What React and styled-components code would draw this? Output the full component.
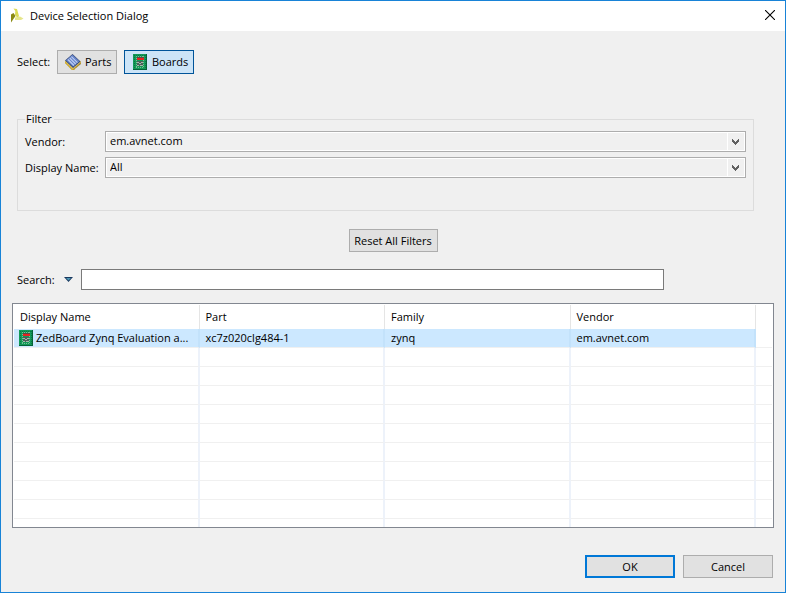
import React, { useState } from "react";
import styled, { createGlobalStyle } from "styled-components";

const GlobalStyle = createGlobalStyle`
  * {
    box-sizing: border-box;
  }
  body {
    margin: 0;
    color: #000;
    font-family: "Open Sans", "Noto Sans", sans-serif;
    font-size: 11px;
    line-height: 16px;
  }
  button, input, select {
    font: inherit;
    color: inherit;
    margin: 0;
  }
  svg {
    flex-shrink: 0;
  }
`;

const Window = styled.div`
  display: flex;
  flex-direction: column;
  min-height: 100vh;
  background: #f0f0f0;
  border: 1px solid #1883d7;
`;

const TitleBar = styled.header`
  display: flex;
  align-items: center;
  height: 30px;
  padding: 0 10px 0 8px;
  background: #fff;
`;

const Title = styled.h1`
  flex: 1;
  margin: 0 0 0 5px;
  font-size: 11px;
  font-weight: 400;
`;

const CloseButton = styled.button`
  display: flex;
  padding: 0 0 2px;
  border: 0;
  background: none;
`;

const Content = styled.main`
  display: flex;
  flex: 1;
  flex-direction: column;
  padding: 19px 11px 14px;
`;

const Toolbar = styled.div`
  display: flex;
  align-items: center;
  padding-left: 5px;
`;

const ToolbarLabel = styled.span`
  width: 40px;
`;

const ToggleButton = styled.button`
  display: flex;
  align-items: center;
  gap: 4px;
  width: ${(props) => props.$width}px;
  height: 24px;
  margin-right: 7px;
  padding: 0 0 0 7px;
  border: 1px solid ${(props) => (props.$active ? "#005499" : "#adadad")};
  background: ${(props) => (props.$active ? "#cce4f7" : "#e1e1e1")};
`;

const FilterGroup = styled.fieldset`
  display: grid;
  grid-template-columns: 80px 1fr;
  row-gap: 5px;
  align-items: center;
  margin: 37px 20px 0 5px;
  padding: 4px 7px 32px;
  border: 1px solid #dcdcdc;
`;

const Legend = styled.legend`
  padding: 0 2px 0 1px;
`;

const SelectBox = styled.div`
  position: relative;
  display: flex;
`;

const Select = styled.select`
  appearance: none;
  width: 100%;
  height: 21px;
  padding: 0 20px 2px 4px;
  border: 1px solid #adadad;
  border-radius: 0;
  background: #f0f0f0;
  box-shadow: inset 0 0 0 1px #fff;
`;

const SelectArrow = styled.span`
  position: absolute;
  top: 2px;
  right: 2px;
  bottom: 2px;
  display: flex;
  align-items: center;
  justify-content: center;
  width: 17px;
  padding-right: 1px;
  border-left: 1px solid #fff;
  pointer-events: none;
`;

const PushButton = styled.button`
  width: ${(props) => props.$width}px;
  height: 23px;
  padding: 0;
  border: ${(props) => (props.$primary ? "2px solid #0078d7" : "1px solid #adadad")};
  background: #e1e1e1;
`;

const ResetRow = styled.div`
  display: flex;
  justify-content: center;
  margin-top: 18px;
`;

const SearchRow = styled.div`
  display: flex;
  align-items: center;
  margin: 17px 110px 0 5px;
`;

const SearchLabel = styled.label`
  width: 45px;
`;

const SearchMenuButton = styled.button`
  display: flex;
  width: 19px;
  padding: 0 2px;
  border: 0;
  background: none;
`;

const SearchInput = styled.input`
  flex: 1;
  min-width: 0;
  height: 21px;
  padding: 0 4px;
  border: 1px solid #7a7a7a;
  background: #fff;
`;

const TableFrame = styled.div`
  flex: 1 0 225px;
  height: 225px;
  margin-top: 13px;
  padding: 1px;
  overflow: hidden;
  border: 1px solid #828790;
  background: #fff;
`;

const Table = styled.table`
  width: 100%;
  table-layout: fixed;
  border-collapse: separate;
  border-spacing: 0;
`;

const HeaderCell = styled.th`
  height: 24px;
  padding: 0 6px;
  border-right: 1px solid #e5e5e5;
  font-weight: 400;
  text-align: left;

  &:last-child {
    border-right: 0;
  }
`;

const Cell = styled.td`
  height: 19px;
  padding: 0 6px;
  border-right: 2px solid ${(props) => (props.$selected ? "#c3e2fb" : "#edf2fa")};
  border-bottom: 1px solid #f0f0f0;
  background: ${(props) => (props.$selected ? "#cce8ff" : "#fff")};
  background-clip: padding-box;
  white-space: nowrap;

  &:last-child {
    border-right: 0;
  }
`;

const BoardCell = styled(Cell)`
  padding: 0 4px;
`;

const BoardName = styled.div`
  display: flex;
  align-items: center;
  gap: 2px;
`;

const DialogButtons = styled.footer`
  display: flex;
  justify-content: flex-end;
  gap: 8px;
  margin: 27px 1px 0 0;
`;

const Logo = () => (
  <svg width="16" height="16" viewBox="0 0 16 16">
    <path d="M4.5 0.5L8 1L10 8L8.5 10L6 7L6.3 3Z" fill="#dcdc55" />
    <path d="M2 6.5L4.5 5L6.5 8L2 14.5Z" fill="#8a8a12" />
    <path d="M6 9.5L11 8.5L14.5 10.5L12 12H6Z" fill="#e6e68c" />
  </svg>
);

const CloseIcon = () => (
  <svg width="10" height="10" viewBox="0 0 10 10">
    <path d="M0 0L10 10M10 0L0 10" stroke="#000" strokeWidth="1.1" />
  </svg>
);

const ChipIcon = () => (
  <svg width="16" height="16" viewBox="0 0 16 16">
    <path d="M0 7L8 15L16 8V10L8.5 16H7L0 9Z" fill="#8b8250" />
    <path d="M1 7V10M3 9V12M5 11V14M7 13V16" stroke="#f2c52e" strokeWidth="1.3" />
    <path d="M9 13V16M11 11V14M13 9V12M15 7V10" stroke="#d9a81c" strokeWidth="1.1" />
    <path d="M0 6.5L7.5 0L15.5 7.5L8 14Z" fill="#33456f" />
    <path d="M1 6.3L7.5 0.8L14.5 7.3L8 12.8Z" fill="#6683c8" />
    <path
      d="M3 5.5L9 11.5M4.7 4L10.7 10M6.4 2.6L12.4 8.6"
      stroke="#bccdf4"
      strokeWidth="1.1"
    />
  </svg>
);

const BoardIcon = () => (
  <svg width="16" height="16" viewBox="-1 0 16 16" shapeRendering="crispEdges">
    <rect width="14" height="16" fill="#129a58" />
    <path d="M0 15.5H14M13.5 0V16" stroke="#056238" />
    <path d="M1 1.5H13M1.5 1V15M12.5 1V15" stroke="#087643" strokeDasharray="1 1" />
    <path d="M3 2.5H11M3.5 2V14M10.5 2V14M3 13.5H11" stroke="#78bc95" strokeDasharray="1 1" />
    <rect x="4" y="3" width="7" height="1" fill="#584b43" />
    <rect x="4" y="4" width="7" height="2" fill="#e62320" />
    <rect x="4" y="7" width="6" height="5" fill="#476159" />
    <path d="M4 8.5H6M6 9.5H8M8 8.5H10M4 11.5H6M7 11.5H10" stroke="#a5b5ab" />
  </svg>
);

const ChevronIcon = () => (
  <svg width="7" height="6" viewBox="0 0 7 6" shapeRendering="crispEdges">
    <path
      d="M0 0H1V1H2V2H3V3H4V2H5V1H6V0H7V3H6V4H5V5H4V6H3V5H2V4H1V3H0Z"
      fill="#606060"
    />
  </svg>
);

const MenuArrowIcon = () => (
  <svg width="9" height="5" viewBox="0 0 9 5">
    <path d="M0 0H9L4.5 5Z" fill="#17375e" />
    <path d="M2 1H7L4.5 3.6Z" fill="#4d97b5" />
  </svg>
);

const columns = ["Display Name", "Part", "Family", "Vendor"];
const boards = [
  {
    name: "ZedBoard Zynq Evaluation a...",
    part: "xc7z020clg484-1",
    family: "zynq",
    vendor: "em.avnet.com",
  },
];
const emptyRows = Array.from({ length: 10 });

function App() {
  const [mode, setMode] = useState("boards");
  const [search, setSearch] = useState("");

  return (
    <>
      <GlobalStyle />
      <Window>
        <TitleBar>
          <Logo />
          <Title>Device Selection Dialog</Title>
          <CloseButton aria-label="Close">
            <CloseIcon />
          </CloseButton>
        </TitleBar>
        <Content>
          <Toolbar>
            <ToolbarLabel>Select:</ToolbarLabel>
            <ToggleButton
              $width={60}
              $active={mode === "parts"}
              onClick={() => setMode("parts")}
            >
              <ChipIcon />
              Parts
            </ToggleButton>
            <ToggleButton
              $width={70}
              $active={mode === "boards"}
              onClick={() => setMode("boards")}
            >
              <BoardIcon />
              Boards
            </ToggleButton>
          </Toolbar>
          <FilterGroup>
            <Legend>Filter</Legend>
            <label htmlFor="vendor">Vendor:</label>
            <SelectBox>
              <Select id="vendor">
                <option>em.avnet.com</option>
              </Select>
              <SelectArrow>
                <ChevronIcon />
              </SelectArrow>
            </SelectBox>
            <label htmlFor="display-name">Display Name:</label>
            <SelectBox>
              <Select id="display-name">
                <option>All</option>
              </Select>
              <SelectArrow>
                <ChevronIcon />
              </SelectArrow>
            </SelectBox>
          </FilterGroup>
          <ResetRow>
            <PushButton $width={89}>Reset All Filters</PushButton>
          </ResetRow>
          <SearchRow>
            <SearchLabel htmlFor="search">Search:</SearchLabel>
            <SearchMenuButton aria-label="Search options">
              <MenuArrowIcon />
            </SearchMenuButton>
            <SearchInput
              id="search"
              value={search}
              onChange={(e) => setSearch(e.target.value)}
            />
          </SearchRow>
          <TableFrame>
            <Table>
              <colgroup>
                {columns.map((column) => (
                  <col key={column} />
                ))}
                <col width="16" />
              </colgroup>
              <thead>
                <tr>
                  {columns.map((column) => (
                    <HeaderCell key={column}>{column}</HeaderCell>
                  ))}
                  <HeaderCell as="td" />
                </tr>
              </thead>
              <tbody>
                {boards.map((board) => (
                  <tr key={board.name}>
                    <BoardCell $selected>
                      <BoardName>
                        <BoardIcon />
                        {board.name}
                      </BoardName>
                    </BoardCell>
                    <Cell $selected>{board.part}</Cell>
                    <Cell $selected>{board.family}</Cell>
                    <Cell $selected>{board.vendor}</Cell>
                    <Cell />
                  </tr>
                ))}
                {emptyRows.map((_, index) => (
                  <tr key={index}>
                    <Cell />
                    <Cell />
                    <Cell />
                    <Cell />
                    <Cell />
                  </tr>
                ))}
              </tbody>
            </Table>
          </TableFrame>
          <DialogButtons>
            <PushButton $width={90} $primary>
              OK
            </PushButton>
            <PushButton $width={90}>Cancel</PushButton>
          </DialogButtons>
        </Content>
      </Window>
    </>
  );
}

export default App;
